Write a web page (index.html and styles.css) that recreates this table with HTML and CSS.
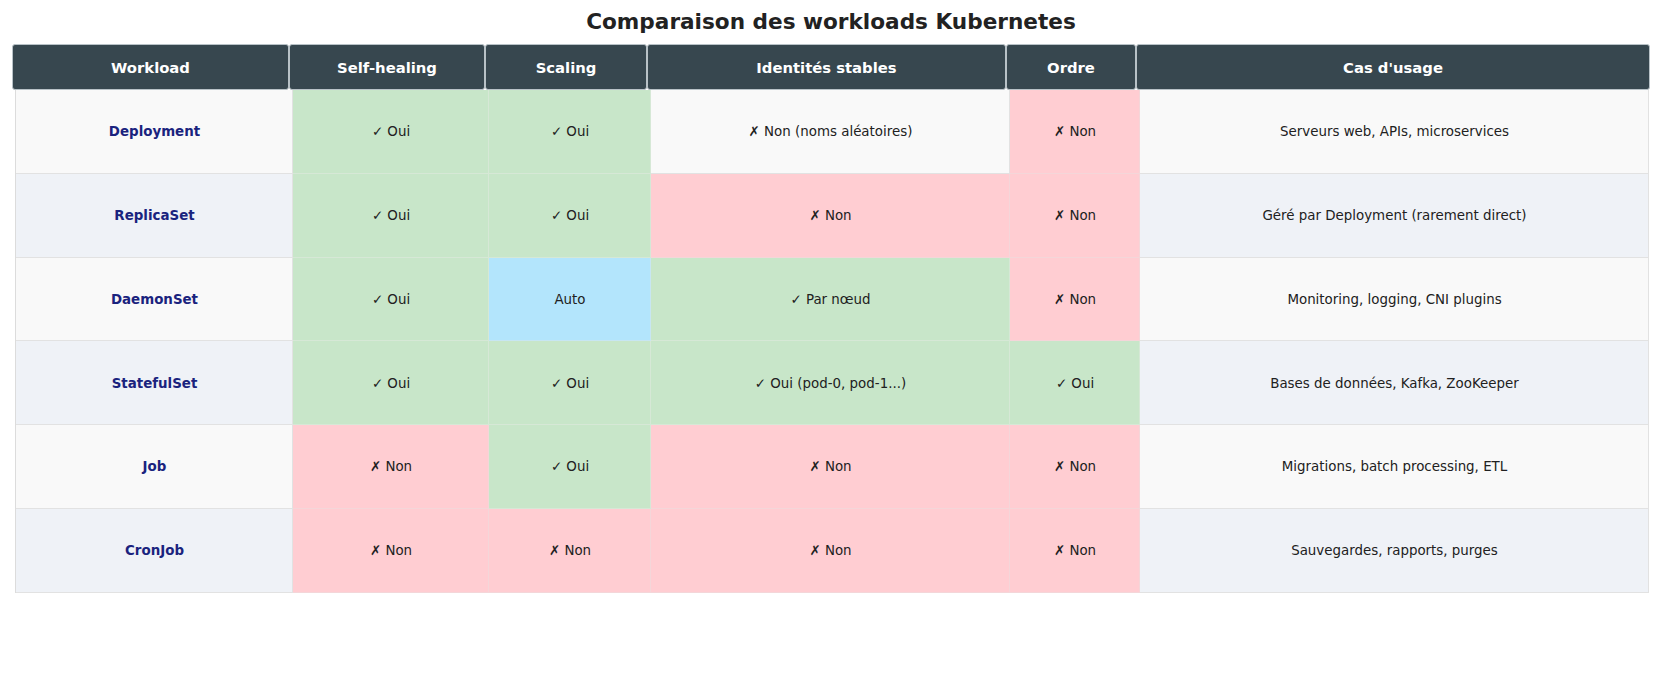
FILE: index.html
```html
<!DOCTYPE html>
<html lang="fr">
<head>
<meta charset="utf-8">
<title>Comparaison des workloads Kubernetes</title>
<link rel="stylesheet" href="styles.css">
</head>
<body>
<h1 class="title">Comparaison des workloads Kubernetes</h1>
<div class="head">
  <div class="hcell">Workload</div>
  <div class="hcell">Self-healing</div>
  <div class="hcell">Scaling</div>
  <div class="hcell">Identités stables</div>
  <div class="hcell">Ordre</div>
  <div class="hcell">Cas d'usage</div>
</div>
<div class="grid">
  <div class="cell name odd">Deployment</div>
  <div class="cell yes">✓ Oui</div>
  <div class="cell yes">✓ Oui</div>
  <div class="cell odd">✗ Non (noms aléatoires)</div>
  <div class="cell no">✗ Non</div>
  <div class="cell odd">Serveurs web, APIs, microservices</div>

  <div class="cell name even">ReplicaSet</div>
  <div class="cell yes">✓ Oui</div>
  <div class="cell yes">✓ Oui</div>
  <div class="cell no">✗ Non</div>
  <div class="cell no">✗ Non</div>
  <div class="cell even">Géré par Deployment (rarement direct)</div>

  <div class="cell name odd">DaemonSet</div>
  <div class="cell yes">✓ Oui</div>
  <div class="cell auto">Auto</div>
  <div class="cell yes">✓ Par nœud</div>
  <div class="cell no">✗ Non</div>
  <div class="cell odd">Monitoring, logging, CNI plugins</div>

  <div class="cell name even">StatefulSet</div>
  <div class="cell yes">✓ Oui</div>
  <div class="cell yes">✓ Oui</div>
  <div class="cell yes">✓ Oui (pod-0, pod-1...)</div>
  <div class="cell yes">✓ Oui</div>
  <div class="cell even">Bases de données, Kafka, ZooKeeper</div>

  <div class="cell name odd">Job</div>
  <div class="cell no">✗ Non</div>
  <div class="cell yes">✓ Oui</div>
  <div class="cell no">✗ Non</div>
  <div class="cell no">✗ Non</div>
  <div class="cell odd">Migrations, batch processing, ETL</div>

  <div class="cell name even">CronJob</div>
  <div class="cell no">✗ Non</div>
  <div class="cell no">✗ Non</div>
  <div class="cell no">✗ Non</div>
  <div class="cell no">✗ Non</div>
  <div class="cell even">Sauvegardes, rapports, purges</div>
</div>
</body>
</html>
```
FILE: styles.css
```css
html, body {
  margin: 0;
  padding: 0;
  background: #ffffff;
}
body {
  font-family: "DejaVu Sans", "Liberation Sans", sans-serif;
  color: #212121;
}
.title {
  margin: 0;
  height: 44px;
  line-height: 43px;
  text-align: center;
  font-size: 21.6px;
  font-weight: bold;
  color: #222222;
}
.head {
  display: grid;
  grid-template-columns: 277px 196px 162px 359px 130px 514px;
  margin-left: 12px;
  height: 46px;
}
.hcell {
  background: #37474f;
  color: #ffffff;
  font-weight: bold;
  font-size: 14.8px;
  display: flex;
  align-items: center;
  justify-content: center;
  border: 1px solid #b8c2c7;
  border-radius: 3px;
  box-sizing: border-box;
}
.grid {
  display: grid;
  grid-template-columns: 277px 196px 162px 359px 130px 509px;
  grid-template-rows: repeat(6, 83.75px);
  margin-left: 15px;
  width: 1633px;
  border-left: 1px solid #dcdcdc;
  box-sizing: border-box;
}
.cell {
  display: flex;
  align-items: center;
  justify-content: center;
  font-size: 13.4px;
  color: #212121;
  box-shadow: inset -1px -1px 0 #e2e2e2;
}
.name {
  font-weight: bold;
  color: #1a237e;
}
.odd { background: #f9f9f9; }
.even { background: #eff2f7; }
.yes { background: #c8e6c9; box-shadow: inset -1px -1px 0 #d6e8d6; }
.no { background: #ffcdd2; box-shadow: inset -1px -1px 0 #f4d6d9; }
.auto { background: #b3e5fc; box-shadow: inset -1px -1px 0 #c8e6f2; }
```
